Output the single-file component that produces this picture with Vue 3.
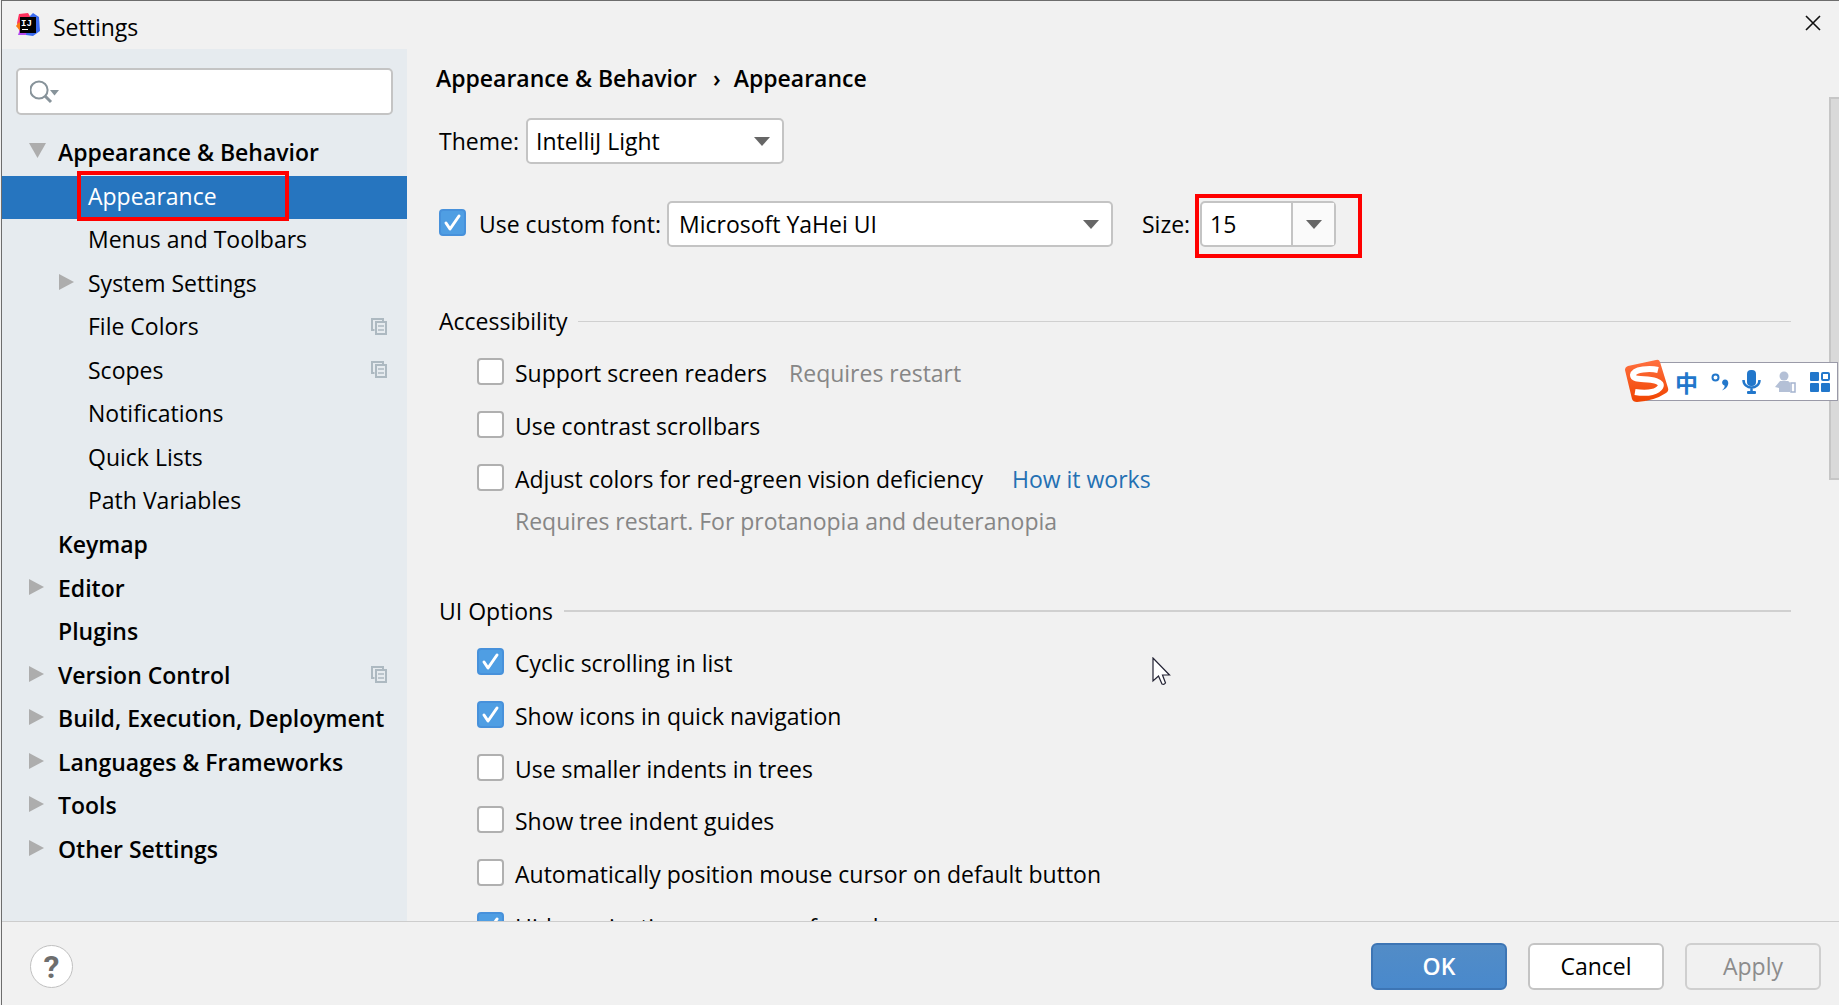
<script setup>
import { ref } from 'vue'

const query = ref('')
const theme = ref('IntelliJ Light')
const customFont = ref(true)
const font = ref('Microsoft YaHei UI')
const size = ref('15')

const tree = [
  { label: 'Appearance & Behavior', top: true, arrow: 'open' },
  { label: 'Appearance', selected: true },
  { label: 'Menus and Toolbars' },
  { label: 'System Settings', arrow: 'closed' },
  { label: 'File Colors', project: true },
  { label: 'Scopes', project: true },
  { label: 'Notifications' },
  { label: 'Quick Lists' },
  { label: 'Path Variables' },
  { label: 'Keymap', top: true },
  { label: 'Editor', top: true, arrow: 'closed' },
  { label: 'Plugins', top: true },
  { label: 'Version Control', top: true, arrow: 'closed', project: true },
  { label: 'Build, Execution, Deployment', top: true, arrow: 'closed' },
  { label: 'Languages & Frameworks', top: true, arrow: 'closed' },
  { label: 'Tools', top: true, arrow: 'closed' },
  { label: 'Other Settings', top: true, arrow: 'closed' },
]

const accessibility = ref([
  { label: 'Support screen readers', on: false, note: 'Requires restart' },
  { label: 'Use contrast scrollbars', on: false },
  { label: 'Adjust colors for red-green vision deficiency', on: false, link: 'How it works' },
])

const uiOptions = ref([
  { label: 'Cyclic scrolling in list', on: true },
  { label: 'Show icons in quick navigation', on: true },
  { label: 'Use smaller indents in trees', on: false },
  { label: 'Show tree indent guides', on: false },
  { label: 'Automatically position mouse cursor on default button', on: false },
  { label: 'Hide navigation popups on focus loss', on: true },
])
</script>

<template>
  <div class="window">
    <header class="titlebar">
      <svg class="app-icon" width="24" height="24" viewBox="0 0 24 24" aria-hidden="true">
        <path d="M3 1 L12 0 L15 5 L14 18 L4 20 L1 10 Z" fill="#fe315d" />
        <path d="M0 13 L3 9 L7 14 L5 19 Z" fill="#f97a12" />
        <path d="M2 22 L4 16 L14 17 L12 22 Z" fill="#b44af0" />
        <path d="M14 3 L17 0 L23 4 L24 18 L17 23 L10 22 Z" fill="#3b6bf0" />
        <rect x="4" y="4" width="16" height="16" fill="#000" />
        <text x="5" y="13" class="app-letters">IJ</text>
        <rect x="6" y="16" width="6" height="1" fill="#fff" />
      </svg>
      <h1 class="title">Settings</h1>
      <button class="close" type="button" aria-label="Close">
        <svg width="16" height="16" viewBox="0 0 16 16"><path d="M1 1 L15 15 M15 1 L1 15" stroke="#111" stroke-width="1.6" /></svg>
      </button>
    </header>

    <div class="body">
      <aside class="sidebar">
        <div class="search">
          <svg width="32" height="24" viewBox="0 0 32 24" aria-hidden="true">
            <circle cx="9" cy="10" r="8.6" fill="none" stroke="#87939a" stroke-width="2" />
            <path d="M15 16 L21 22" stroke="#87939a" stroke-width="3" />
            <path d="M20 10 H29 L24.500 15.500 Z" fill="#87939a" />
          </svg>
          <input v-model="query" type="text" aria-label="Search settings" />
        </div>
        <ul class="tree">
          <li v-for="item in tree" :key="item.label" :class="{ top: item.top, selected: item.selected }">
            <span class="arrow">
              <svg v-if="item.arrow === 'closed'" width="16" height="18" viewBox="0 0 16 18"><path d="M0 1 L15 9 L0 17 Z" fill="#adadad" /></svg>
              <svg v-if="item.arrow === 'open'" width="17" height="18" viewBox="0 0 17 18"><path d="M0 1 H17 L8.500 16 Z" fill="#adadad" /></svg>
            </span>
            <span class="name">{{ item.label }}<span v-if="item.selected" class="mark mark-item"></span></span>
            <svg v-if="item.project" class="project" width="16" height="17" viewBox="0 0 16 17">
              <path d="M3.500 12 H1 V1 H12 V3" fill="none" stroke="#adb9c1" stroke-width="2" />
              <rect x="5" y="4" width="10" height="12" fill="none" stroke="#adb9c1" stroke-width="2" />
              <path d="M7 8 H13 M7 12 H13" stroke="#adb9c1" stroke-width="1.500" />
            </svg>
          </li>
        </ul>
      </aside>

      <main class="content">
        <h2 class="crumbs"><span>Appearance &amp; Behavior</span><span class="sep">›</span><span>Appearance</span></h2>

        <div class="field theme-row">
          <label for="theme">Theme:</label>
          <span class="combo combo-theme">
            <select id="theme" v-model="theme"><option>IntelliJ Light</option></select>
            <svg width="16" height="9" viewBox="0 0 16 9"><path d="M0 0 H16 L8 9 Z" fill="#666" /></svg>
          </span>
        </div>

        <div class="field font-row">
          <input id="custom" v-model="customFont" type="checkbox" />
          <label for="custom" class="custom-label">Use custom font:</label>
          <span class="combo combo-font">
            <select v-model="font" aria-label="Font"><option>Microsoft YaHei UI</option></select>
            <svg width="16" height="9" viewBox="0 0 16 9"><path d="M0 0 H16 L8 9 Z" fill="#666" /></svg>
          </span>
          <label for="size" class="size-label">Size:</label>
          <span class="size">
            <input id="size" v-model="size" type="text" />
            <button type="button" aria-label="Choose size">
              <svg width="16" height="9" viewBox="0 0 16 9"><path d="M0 0 H16 L8 9 Z" fill="#666" /></svg>
            </button>
            <span class="mark mark-size"></span>
          </span>
        </div>

        <section class="group">
          <h3>Accessibility</h3>
          <div class="options three">
            <div v-for="(o, i) in accessibility" :key="o.label" class="option">
              <input :id="'a' + i" v-model="o.on" type="checkbox" />
              <label :for="'a' + i">{{ o.label }}</label>
              <span v-if="o.note" class="note">{{ o.note }}</span>
              <a v-if="o.link" href="#">{{ o.link }}</a>
            </div>
          </div>
          <p class="hint">Requires restart. For protanopia and deuteranopia</p>
        </section>

        <section class="group ui">
          <h3>UI Options</h3>
          <div class="options six">
            <div v-for="(o, i) in uiOptions" :key="o.label" class="option">
              <input :id="'u' + i" v-model="o.on" type="checkbox" />
              <label :for="'u' + i">{{ o.label }}</label>
            </div>
          </div>
        </section>
        <div class="scroll-thumb"></div>
      </main>
    </div>

    <footer class="footer">
      <button class="help" type="button" aria-label="Help">?</button>
      <div class="actions">
        <button class="btn ok" type="button">OK</button>
        <button class="btn" type="button">Cancel</button>
        <button class="btn" type="button" disabled>Apply</button>
      </div>
    </footer>

    <div class="ime">
      <svg class="ime-logo" width="46" height="44" viewBox="0 0 46 44" aria-hidden="true">
        <defs>
          <linearGradient id="flame" x1="0" y1="0" x2="0" y2="1"><stop offset="0" stop-color="#ff7040" /><stop offset="1" stop-color="#f04400" /></linearGradient>
        </defs>
        <path d="M4 7 Q18 4 32 1 Q35 0 36 3 L44 29 Q45 32 42 34 Q30 42 13 43 Q9 43 8 40 L1 11 Q1 8 4 7 Z" fill="url(#flame)" />
        <path d="M34 11 C26 9 10 10 9 16 C9 22 22 19 32 22 C41 25 36 31 28 33 C22 34.500 17 34 11 33" fill="none" stroke="#fff" stroke-width="6" />
      </svg>
      <span class="ime-lang" lang="zh">中</span>
      <svg width="18" height="18" viewBox="0 0 18 18" aria-hidden="true">
        <circle cx="4.500" cy="4.500" r="3" fill="none" stroke="#2277cb" stroke-width="2" />
        <path d="M14 6.500 C19 6.500 18.500 15 11 17.500 C13 15.500 14 14 13.500 12.500 C10 12 10.500 6.500 14 6.500 Z" fill="#2277cb" />
      </svg>
      <svg width="20" height="24" viewBox="0 0 20 24" aria-hidden="true">
        <rect x="5" y="0" width="9" height="16" rx="4" fill="#2277cb" />
        <path d="M1.500 10 C1.500 20 17.500 20 17.500 10 M9.500 17 V22" fill="none" stroke="#2277cb" stroke-width="2.500" />
        <rect x="5" y="21" width="9" height="3" rx="1" fill="#2277cb" />
      </svg>
      <svg width="22" height="22" viewBox="0 0 22 22" aria-hidden="true">
        <circle cx="9" cy="5" r="4.500" fill="#b4c0d6" />
        <path d="M5 10 H13 Q15 11 15 12 V21 H4 V17 L0 16 Z" fill="#b4c0d6" />
        <path d="M16 12 H20 V21 H16 Z" fill="#fff" stroke="#a5b4cf" stroke-width="1.500" />
      </svg>
      <svg width="20" height="20" viewBox="0 0 20 20" aria-hidden="true">
        <rect x="0" y="0" width="9" height="9" rx="1" fill="#2277cb" />
        <rect x="12" y="1" width="7" height="7" rx="1" fill="none" stroke="#2277cb" stroke-width="2" />
        <rect x="0" y="11" width="9" height="9" rx="1" fill="#2277cb" />
        <rect x="11" y="11" width="9" height="9" rx="1" fill="#2277cb" />
      </svg>
    </div>

    <svg class="pointer" width="20" height="30" viewBox="0 0 20 30" aria-hidden="true">
      <path d="M1 1 V24 L6.500 19 L10 27 Q12 28 13.500 26 L10.500 18 H17.500 Z" fill="#fff" stroke="#223" stroke-width="1.200" />
    </svg>
  </div>
</template>

<style>
body {
  margin: 0;
  background: #f1f1f1;
}
</style>

<style scoped>
* {
  box-sizing: border-box;
}
.window {
  position: relative;
  display: flex;
  flex-direction: column;
  height: 100vh;
  margin-left: 1px;
  border: 1px solid #6d6d6d;
  border-width: 1px 0 0 1px;
  background: #f1f1f1;
  color: #000;
  font-family: "Open Sans", sans-serif;
  font-size: 23px;
  line-height: 32px;
  overflow: hidden;
}
h1, h2, h3, p, ul {
  margin: 0;
  padding: 0;
  font-size: inherit;
}
input, select, button {
  font: inherit;
  color: inherit;
  padding: 0;
}
.titlebar {
  display: flex;
  align-items: center;
  flex: none;
  height: 48px;
  padding: 0 18px 0 14px;
}
.app-letters {
  font: bold 9px "Liberation Mono", monospace;
  fill: #fff;
}
.title {
  flex: 1;
  margin-left: 13px;
  padding-top: 4px;
  font-weight: 400;
}
.close {
  display: flex;
  border: 0;
  background: none;
  margin-bottom: 4px;
}
.body {
  display: flex;
  flex: 1;
  min-height: 0;
}
.sidebar {
  flex: none;
  width: 405px;
  background: #e6ebef;
  padding-top: 19px;
}
.search {
  display: flex;
  align-items: center;
  gap: 8px;
  height: 47px;
  margin: 0 14px 17px;
  padding: 0 12px;
  border: 2px solid #c4c4c4;
  border-radius: 5px;
  background: #fff;
}
.search input {
  flex: 1;
  min-width: 0;
  border: 0;
  outline: 0;
  background: none;
}
.tree {
  display: grid;
  grid-template-columns: minmax(0, 1fr);
  grid-auto-rows: 1fr;
  height: 740px;
  list-style: none;
}
.tree li {
  display: flex;
  align-items: center;
  padding: 0 20px 3px 57px;
}
.tree li.top {
  padding-left: 27px;
  font-weight: 600;
}
.tree li.selected {
  background: #2675bf;
  color: #fff;
}
.arrow {
  display: flex;
  width: 29px;
  padding-bottom: 2px;
}
.name {
  position: relative;
  flex: 1;
  white-space: nowrap;
}
.mark {
  position: absolute;
  border: 4px solid #f00;
  pointer-events: none;
}
.mark-item {
  left: -11px;
  top: -9px;
  width: 212px;
  height: 50px;
}
.content {
  position: relative;
  flex: 1;
  min-width: 0;
  padding: 13px 48px 0 32px;
  overflow: hidden;
}
.crumbs {
  display: flex;
  margin-left: -3px;
  font-weight: 600;
}
.sep {
  margin: 0 13px 0 16px;
}
.field {
  display: flex;
  align-items: center;
  height: 46px;
}
.theme-row {
  margin-top: 24px;
}
.theme-row label {
  width: 87px;
}
.font-row {
  margin-top: 37px;
}
.combo {
  position: relative;
  display: block;
  height: 46px;
}
.combo select {
  appearance: none;
  width: 100%;
  height: 100%;
  padding: 0 8px;
  border: 2px solid #c4c4c4;
  border-radius: 5px;
  background: #fff;
}
.combo svg {
  position: absolute;
  right: 14px;
  top: 19px;
  pointer-events: none;
}
.combo-theme {
  width: 258px;
}
.combo-font {
  width: 446px;
}
.combo-font select {
  padding-left: 10px;
}
.custom-label {
  width: 188px;
  margin-left: 13px;
}
.size-label {
  width: 58px;
  margin-left: 29px;
}
.size {
  position: relative;
  display: flex;
  width: 136px;
  height: 46px;
  border: 2px solid #c4c4c4;
  border-radius: 5px;
  background: #fff;
}
.size input {
  flex: 1;
  min-width: 0;
  padding-left: 8px;
  border: 0;
  background: none;
}
.size button {
  display: grid;
  place-items: center;
  width: 43px;
  border: 0;
  border-left: 2px solid #c4c4c4;
  background: #fafafa;
}
.mark-size {
  left: -7px;
  top: -9px;
  width: 167px;
  height: 64px;
}
input[type='checkbox'] {
  appearance: none;
  flex: none;
  width: 27px;
  height: 27px;
  margin: 0 0 3px;
  border: 2px solid #b0b0b0;
  border-radius: 4px;
  background: #fff;
}
input[type='checkbox']:checked {
  border-color: #4791db;
  background: #4f9ee3 url("data:image/svg+xml,%3Csvg xmlns='http://www.w3.org/2000/svg' viewBox='0 0 23 23'%3E%3Cpath d='M5 12 L9 18 L18 5' fill='none' stroke='%23fff' stroke-width='3' stroke-linecap='round' stroke-linejoin='round'/%3E%3C/svg%3E") center / 23px 23px;
}
.group {
  margin-top: 58px;
}
.group h3 {
  display: flex;
  align-items: center;
  gap: 11px;
  font-weight: 400;
}
.group h3::after {
  content: '';
  flex: 1;
  height: 1px;
  background: #d0d0d0;
}
.ui h3::after {
  height: 2px;
}
.options {
  display: grid;
  grid-auto-rows: 1fr;
  margin-top: 10px;
  padding-left: 38px;
}
.three {
  height: 158px;
}
.six {
  height: 316px;
}
.option {
  display: flex;
  align-items: center;
  white-space: nowrap;
}
.option label {
  margin-left: 11px;
}
.note {
  margin-left: 22px;
  color: #868686;
}
.option a {
  margin-left: 29px;
  color: #2470b3;
  text-decoration: none;
}
.hint {
  padding-left: 76px;
  color: #868686;
}
.scroll-thumb {
  position: absolute;
  right: 0;
  top: 48px;
  width: 10px;
  height: 383px;
  border: 2px solid #c6c6c6;
  border-right: 0;
  background: #d9d9d9;
}
.footer {
  display: flex;
  align-items: center;
  justify-content: space-between;
  flex: none;
  height: 84px;
  padding: 6px 18px 0 28px;
  border-top: 1px solid #cdcdcd;
}
.help {
  width: 43px;
  height: 43px;
  border: 1px solid #c0c0c0;
  border-radius: 50%;
  background: #fff;
  color: #6e6e6e;
  font: bold 32px/40px Roboto, sans-serif;
}
.actions {
  display: flex;
  gap: 21px;
  padding-bottom: 1px;
}
.btn {
  width: 136px;
  height: 47px;
  border: 2px solid #c4c4c4;
  border-radius: 6px;
  background: #fff;
}
.btn:disabled {
  border-color: #cfcfcf;
  background: #f1f1f1;
  color: #8c8c8c;
}
.ok {
  border-color: #3d75b4;
  background: linear-gradient(#528cc7, #4989cc);
  color: #fff;
  font-weight: 600;
}
.ime {
  position: absolute;
  right: 1px;
  top: 361px;
  display: flex;
  align-items: center;
  justify-content: space-between;
  width: 192px;
  height: 39px;
  padding: 0 7px 0 28px;
  border: 1px solid #9a9aa8;
  background: #fff;
}
.ime-logo {
  position: absolute;
  left: -23px;
  top: -4px;
}
.ime-lang {
  color: #2277cb;
  font: bold 23px/32px "Noto Sans CJK SC", sans-serif;
}
.pointer {
  position: absolute;
  left: 62.600%;
  top: 656px;
}
</style>
